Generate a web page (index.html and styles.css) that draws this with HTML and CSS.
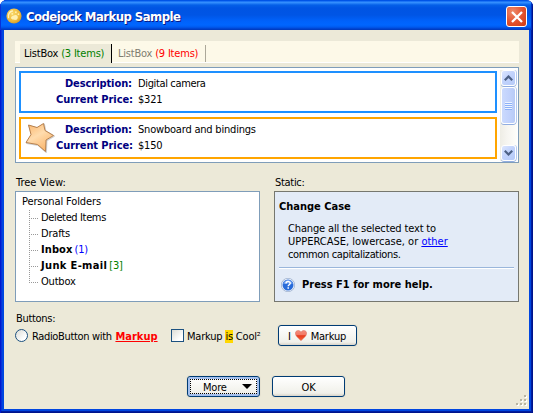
FILE: index.html
```html
<!DOCTYPE html>
<html lang="en">
<head>
<meta charset="utf-8">
<title>Codejock Markup Sample</title>
<link rel="stylesheet" href="styles.css">
</head>
<body>
<div class="window">
  <header class="titlebar">
    <svg class="app-icon" width="16" height="16" viewBox="0 0 16 16">
      <defs><radialGradient id="gold" cx=".4" cy=".35" r=".7"><stop offset="0" stop-color="#f9d768"/><stop offset=".7" stop-color="#edb83a"/><stop offset="1" stop-color="#c8942c"/></radialGradient></defs>
      <circle cx="8" cy="8" r="7.6" fill="url(#gold)"/>
      <path d="M2.500 9.500C1.800 6.500 3.500 3.500 6.500 3" fill="none" stroke="#fff3bd" stroke-width="1.300" stroke-linecap="round"/>
      <path d="M5 9.500C5.500 7.500 8 7.800 9 7 11 6.500 12.500 8.500 11.500 10.500 10.500 12.500 8.500 12 7.500 11.500 6 11.500 5 11 5 9.500ZM9.300 3.200l1.500.3-.3 1.800-1.500-.4ZM12.200 5.200l1.400.8-1 1.200-1.200-.9ZM5.600 5l1.600.3-.3 1.400-1.500-.3Z" fill="#fff0b0"/>
    </svg>
    <h1 class="title">Codejock Markup Sample</h1>
    <button class="close" aria-label="Close"><svg width="12" height="12" viewBox="0 0 12 12"><path d="M1 1l10 10M11 1l-10 10" stroke="#fff" stroke-width="2.300"/></svg></button>
  </header>

  <main class="content">
    <nav class="tabs">
      <div class="tab active">ListBox <span class="green">(3 Items)</span></div>
      <div class="tab">ListBox <span class="red">(9 Items)</span></div>
    </nav>

    <section class="listbox">
      <div class="items">
        <article class="item blue-item">
          <div class="thumb-cell"></div>
          <dl class="fields">
            <dt>Description:</dt><dd class="tight">Digital camera</dd>
            <dt>Current Price:</dt><dd>$321</dd>
          </dl>
        </article>
        <article class="item orange-item">
          <div class="thumb-cell">
            <svg width="32" height="32" viewBox="0 0 32 32">
              <defs><linearGradient id="star" x1="0" y1="0" x2=".6" y2="1"><stop offset="0" stop-color="#fbb469"/><stop offset=".5" stop-color="#ffdcae"/><stop offset="1" stop-color="#fbb66c"/></linearGradient></defs>
              <path d="M4.500 3L13 5.500 19.500 1.500 21 8.500 29.500 13.500 22 18 21.500 29.500 13.500 22.500 2 20.500 7 12.500Z" transform="translate(.7 .7)" fill="none" stroke="#d0d0d0" stroke-width="1.500" stroke-linejoin="round"/>
              <path d="M4.500 3L13 5.500 19.500 1.500 21 8.500 29.500 13.500 22 18 21.500 29.500 13.500 22.500 2 20.500 7 12.500Z" fill="url(#star)" stroke="#b8814d" stroke-linejoin="round"/>
            </svg>
          </div>
          <dl class="fields">
            <dt>Description:</dt><dd>Snowboard and bindings</dd>
            <dt>Current Price:</dt><dd>$150</dd>
          </dl>
        </article>
      </div>
      <div class="scrollbar">
        <div class="sb-button"><svg width="9" height="6" viewBox="0 0 9 6"><path d="M.8 5.200L4.500 1.500 8.200 5.200" fill="none" stroke="#4d6185" stroke-width="2.200"/></svg></div>
        <div class="sb-thumb"><div class="grip"></div></div>
        <div class="sb-track"></div>
        <div class="sb-button"><svg width="9" height="6" viewBox="0 0 9 6"><path d="M.8 .8L4.500 4.500 8.200 .8" fill="none" stroke="#4d6185" stroke-width="2.200"/></svg></div>
      </div>
    </section>

    <div class="panels">
      <section class="tree-panel">
        <h2 class="label tree-label">Tree View:</h2>
        <div class="tree">
          <div class="root">Personal Folders</div>
          <ul class="nodes">
            <li class="tight">Deleted Items</li>
            <li>Drafts</li>
            <li><b class="inbox">Inbox</b> <span class="blue">(1)</span></li>
            <li><b class="junk">Junk E-mail</b> <span class="green">[3]</span></li>
            <li>Outbox</li>
          </ul>
        </div>
      </section>
      <section class="static-panel">
        <h2 class="label">Static:</h2>
        <div class="static">
          <h3 class="static-title">Change Case</h3>
          <p class="static-text"><span class="line1">Change all the selected text to</span><br><span class="line2">UPPERCASE, lowercase, or <a href="#">other</a></span><br><span class="tight">common capitalizations.</span></p>
          <div class="help">
            <svg width="14" height="14" viewBox="0 0 14 14">
              <circle cx="7" cy="7" r="6.700" fill="#f3f7fd" stroke="#8ea3c6" stroke-width=".7"/>
              <circle cx="7" cy="7" r="5.500" fill="#286bd9"/>
              <path d="M2.200 6a4.900 4.900 0 0 1 9.600 0Q7 5 2.200 6Z" fill="#6d9eee"/>
              <path d="M5 5.400C5 3 9.200 3 9.200 5.300 9.200 6.800 7.200 6.700 7.200 8.300M7.200 9.300v1.500" fill="none" stroke="#fff" stroke-width="1.500"/>
            </svg>
            <b>Press F1 for more help.</b>
          </div>
        </div>
      </section>
    </div>

    <h2 class="label buttons-label">Buttons:</h2>
    <div class="controls">
      <div class="radio-row"><span class="radio"></span><span class="caption radio-text">RadioButton with <b class="markup">Markup</b></span></div>
      <div class="check-row"><span class="checkbox"></span><span class="caption">Markup <mark>is</mark> Cool<span class="sq">²</span></span></div>
      <button class="btn heart-btn"><span>I</span><svg width="12" height="11" viewBox="0 0 12 11"><defs><linearGradient id="heart" x1="0" y1="0" x2="0" y2="1"><stop offset="0" stop-color="#f58d7d"/><stop offset=".45" stop-color="#f27863"/><stop offset=".5" stop-color="#e83b1c"/><stop offset="1" stop-color="#f4673c"/></linearGradient></defs><path d="M6 10.700C4.500 8.700.4 6.500.4 3.200.4.200 4.500-.5 6 2.200 7.500-.5 11.600.2 11.600 3.200 11.600 6.500 7.500 8.700 6 10.700Z" fill="url(#heart)" stroke="#d8695b" stroke-width=".5"/></svg><span>Markup</span></button>
    </div>
    <div class="actions">
      <button class="btn more-btn"><span class="focus"><span>More</span><i class="caret"></i></span></button>
      <button class="btn ok-btn">OK</button>
    </div>
    <svg class="resize" width="12" height="12" viewBox="0 0 12 12"><path fill="#fff" d="M9 1h2v2H9zM5 5h2v2H5zM9 5h2v2H9zM1 9h2v2H1zM5 9h2v2H5zM9 9h2v2H9z"/><path fill="#b8b4a2" d="M8 0h2v2H8zM4 4h2v2H4zM8 4h2v2H8zM0 8h2v2H0zM4 8h2v2H4zM8 8h2v2H8z"/></svg>
  </main>
</div>
</body>
</html>
```
FILE: styles.css
```css
* { box-sizing: border-box; }
body {
  margin: 0;
  background: #fff;
  font: 11px/16px "DejaVu Sans Condensed", "DejaVu Sans", sans-serif;
  font-stretch: condensed;
  letter-spacing: -.2px;
  color: #000;
  white-space: nowrap;
}
h1, h2, h3, p, dl, dd, ul { margin: 0; padding: 0; font-size: 11px; font-weight: normal; }
button { font: inherit; letter-spacing: inherit; color: inherit; padding: 0; margin: 0; }
svg { display: block; flex: none; }

.window {
  width: 533px;
  height: 413px;
  display: flex;
  flex-direction: column;
  padding: 0 4px 4px;
  overflow: hidden;
  border-radius: 7px 7px 0 0;
  background: #0046e0;
  box-shadow: inset 1px 0 #0019cf, inset -1px -1px #00138c, inset -2px -2px #001da0, inset 2px 0 #0831d9;
}
.titlebar {
  height: 30px;
  flex: none;
  margin: 0 -4px;
  padding: 0 6px;
  display: flex;
  align-items: center;
  background: linear-gradient(#0050e0 0, #0058ee 1px, #3a93ff 2px, #2b87fb 3px, #0560e8 5px, #0054e3 8px, #0055e5 15px, #0062fb 21px, #0066ff 25px, #005bf0 27px, #0040cb 29px, #0038b8 30px);
  box-shadow: inset 1px 0 #0831d9, inset -1px 0 #00138c, inset -2px 0 #0030c0;
}
.app-icon { margin-top: 1px; }
.title {
  flex: 1;
  margin: 4px 0 0 4px;
  font-size: 13px;
  font-weight: bold;
  letter-spacing: -.55px;
  color: #fff;
  text-shadow: 1px 1px #0a1883;
}
.close {
  width: 21px;
  height: 21px;
  margin-top: 3px;
  border: 1px solid #fff;
  border-radius: 3px;
  display: grid;
  place-items: center;
  background: radial-gradient(circle at 30% 25%, #ee8b6a, #e35431 50%, #cf3a12);
}

.content {
  position: relative;
  flex: 1;
  background: #ece9d8;
  padding: 11px 10px 0 11px;
}
.tabs {
  height: 22px;
  display: flex;
  align-items: flex-start;
  padding: 3px 0 0 5px;
  background: #fdf9e8;
  border-bottom: 1px solid #fff;
}
.tab {
  height: 17px;
  padding-left: 6px;
  width: 94px;
  line-height: 17px;
  margin-top: 1px;
  border-right: 1px solid #aca899;
  color: #807d70;
}
.tab.active {
  width: 92px;
  height: 19px;
  margin-top: 0;
  padding-left: 4px;
  line-height: 19px;
  color: #000;
  background: #ece9d8;
  border-color: #000;
}
.green { color: #008000; }
.red { color: #f00; }
.blue { color: #00f; }
.tight { letter-spacing: -.36px; }

.listbox {
  height: 96px;
  margin-top: 4px;
  border: 1px solid #7f9db9;
  background: #fff;
  display: flex;
  padding: 2px 1px 1px 3px;
}
.items { width: 479px; padding-top: 1px; }
.item {
  height: 42px;
  display: flex;
  padding: 3px 0 0 3px;
  margin-bottom: 4px;
  border: 2px solid #1e90ff;
}
.orange-item { border-color: #ffa500; }
.thumb-cell { width: 32px; height: 32px; }
.fields {
  display: grid;
  grid-template-columns: 76px 1fr;
  grid-template-rows: 16px 16px;
  column-gap: 6px;
}
dt { font-weight: bold; color: #000080; text-align: right; letter-spacing: -.08px; }

.scrollbar {
  width: 17px;
  margin: 0 0 0 3px;
  padding: 0 1px;
  display: flex;
  flex-direction: column;
  background: linear-gradient(90deg, #eeede5, #f6f5f0 40%, #fefefb);
}
.sb-button, .sb-thumb {
  display: grid;
  place-items: center;
  border: 1px solid #fff;
  border-radius: 3px;
  background: linear-gradient(135deg, #dce6fe, #c2d3fc 45%, #b5caf8);
  box-shadow: 0 1px #91ade0, 1px 0 #b7cbf0;
}
.sb-button { height: 16px; flex: none; }
.sb-thumb { height: 37px; margin-top: 1px; background: linear-gradient(90deg, #cbdafd, #c0d1fc 60%, #b8cbf6); }
.sb-track { flex: 1; }
.grip { width: 7px; height: 8px; background: repeating-linear-gradient(#eef4fe 0 1px, #8cb0f8 1px 2px); }

.panels { display: flex; gap: 14px; margin-top: 11px; }
.tree-panel { width: 245px; }
.static-panel { width: 245px; }
.label { height: 17px; padding: 1px 0 0 1px; letter-spacing: -.3px; }
.tree-label { letter-spacing: 0; }
.tree {
  height: 111px;
  border: 1px solid #7f9db9;
  background: #fff;
  padding: 2px 0 0 6px;
}
.root { letter-spacing: -.12px; }
.nodes { list-style: none; margin-left: 7px; }
.nodes li {
  height: 16px;
  display: flex;
  background: repeating-linear-gradient(#999 0 1px, transparent 1px 2px) 0 0 / 1px 16px no-repeat;
}
.nodes li:last-child { background-size: 1px 9px; }
.nodes li::before {
  content: "";
  width: 9px;
  height: 1px;
  margin: 8px 3px 0 0;
  background: repeating-linear-gradient(90deg, #999 0 1px, transparent 1px 2px);
}
.inbox { letter-spacing: .1px; margin-right: 2px; }
.junk { letter-spacing: .35px; margin-right: 2px; }

.static {
  height: 111px;
  border: 1px solid #76776f;
  background: #e3ebf7;
  padding: 7px 4px 0;
}
.static-title { font-weight: bold; letter-spacing: 0; }
.static-text { padding: 7px 0 0 9px; line-height: 13px; }
.line1 { letter-spacing: -.15px; }
.line2 { letter-spacing: 0; }
a { color: #00f; }
.help {
  display: flex;
  align-items: center;
  height: 34px;
  margin-top: 6px;
  padding: 1px 0 0 2px;
  gap: 7px;
  border-top: 1px solid #9ab6db;
  box-shadow: inset 0 1px #fff;
  letter-spacing: 0;
}
.help svg { margin-top: -1px; }

.buttons-label { margin-top: 9px; height: 14px; padding-top: 0; }
.controls { display: flex; align-items: center; height: 21px; }
.caption { padding-top: 3px; }
.radio-row { width: 156px; display: flex; align-items: center; }
.radio {
  width: 13px;
  height: 13px;
  margin-right: 4px;
  border: 1px solid #1c5180;
  border-radius: 50%;
  background: linear-gradient(135deg, #dcdcd6, #fff 75%);
}
.radio-text { letter-spacing: -.34px; }
.markup { color: #f00; text-decoration: underline; letter-spacing: 0; margin-left: 1px; }
.check-row { width: 107px; display: flex; align-items: center; }
.checkbox {
  width: 13px;
  height: 13px;
  margin-right: 3px;
  border: 1px solid #1c5180;
  background: linear-gradient(135deg, #dcdcd6, #fff 75%);
}
mark { background: #ffd700; color: #000; }
.sq { letter-spacing: 0; }
.btn {
  height: 21px;
  padding-top: 3px;
  border: 1px solid #003c74;
  border-radius: 3px;
  background: linear-gradient(#fff, #f5f5f0 60%, #f0f0ea 85%, #d8d3c8);
  box-shadow: 0 0 0 1px #e6e2d1;
  display: flex;
  align-items: center;
  justify-content: center;
}
.heart-btn { width: 79px; gap: 4px; padding-right: 1px; }
.heart-btn svg { margin-top: -3px; }
.actions { display: flex; gap: 12px; margin: 30px 0 0 172px; }
.more-btn {
  width: 73px;
  padding: 2px;
  box-shadow: inset 0 0 0 2px #a4c0ee, 0 0 0 1px #e6e2d1;
}
.focus {
  flex: 1;
  height: 15px;
  border: 1px dotted #000;
  display: flex;
  align-items: flex-start;
  justify-content: space-between;
  padding: 0 4px 0 12px;
}
.caret {
  margin-top: 4px;
  border: solid transparent;
  border-width: 5px 5px 0;
  border-top-color: #000;
}
.ok-btn { width: 73px; }
.resize { position: absolute; right: 1px; bottom: 2px; }
```
